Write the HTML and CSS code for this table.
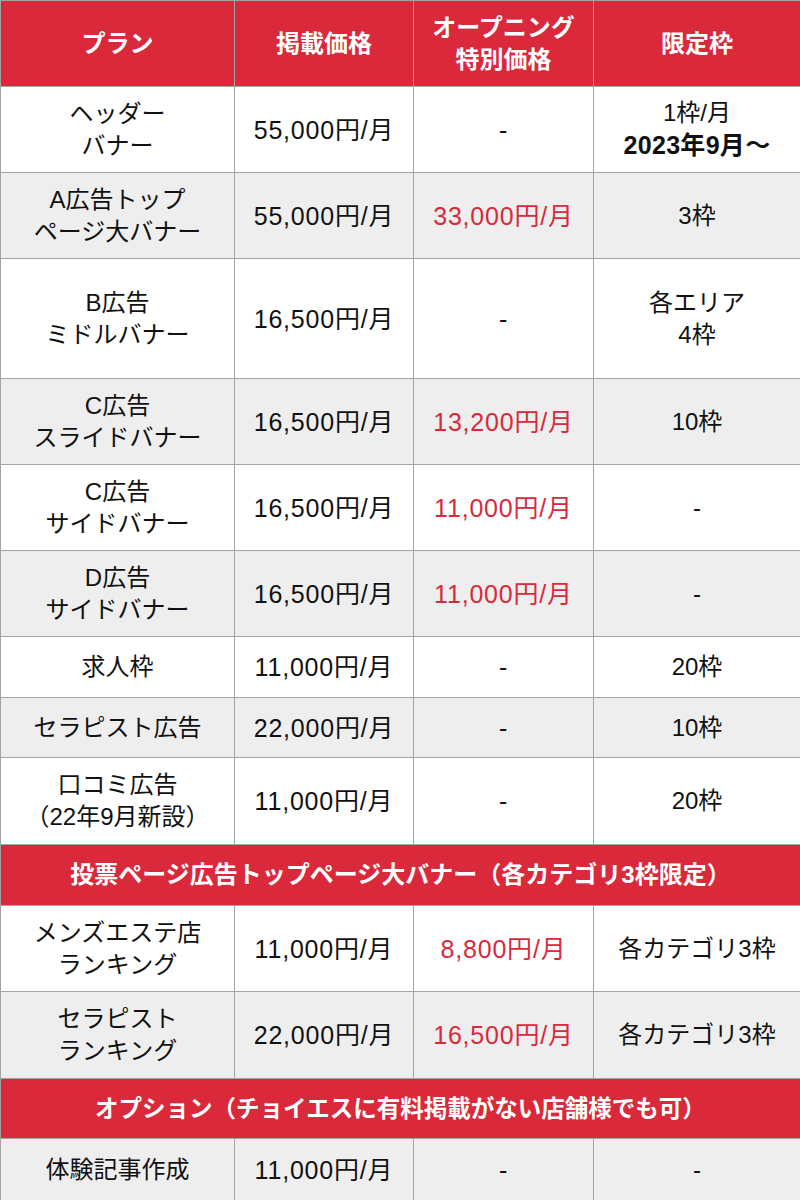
FILE: index.html
```html
<!DOCTYPE html>
<html lang="ja">
<head>
<meta charset="utf-8">
<title>料金表</title>
<link rel="stylesheet" href="styles.css">
</head>
<body>
<table class="price">
  <colgroup>
    <col class="c1"><col class="c2"><col class="c3"><col class="c4">
  </colgroup>
  <thead>
    <tr class="h86 head">
      <th>プラン</th>
      <th>掲載価格</th>
      <th>オープニング<br>特別価格</th>
      <th>限定枠</th>
    </tr>
  </thead>
  <tbody>
    <tr class="h86 w">
      <td>ヘッダー<br>バナー</td>
      <td class="num">55,000円/月</td>
      <td class="num">-</td>
      <td>1枠/月<br><b>2023年9月〜</b></td>
    </tr>
    <tr class="h86 g">
      <td>A広告トップ<br>ページ大バナー</td>
      <td class="num">55,000円/月</td>
      <td class="num red">33,000円/月</td>
      <td>3枠</td>
    </tr>
    <tr class="h120 w">
      <td>B広告<br>ミドルバナー</td>
      <td class="num">16,500円/月</td>
      <td class="num">-</td>
      <td>各エリア<br>4枠</td>
    </tr>
    <tr class="h86 g">
      <td>C広告<br>スライドバナー</td>
      <td class="num">16,500円/月</td>
      <td class="num red">13,200円/月</td>
      <td>10枠</td>
    </tr>
    <tr class="h86 w">
      <td>C広告<br>サイドバナー</td>
      <td class="num">16,500円/月</td>
      <td class="num red">11,000円/月</td>
      <td>-</td>
    </tr>
    <tr class="h86 g">
      <td>D広告<br>サイドバナー</td>
      <td class="num">16,500円/月</td>
      <td class="num red">11,000円/月</td>
      <td>-</td>
    </tr>
    <tr class="h61 w">
      <td>求人枠</td>
      <td class="num">11,000円/月</td>
      <td class="num">-</td>
      <td>20枠</td>
    </tr>
    <tr class="h60 g">
      <td>セラピスト広告</td>
      <td class="num">22,000円/月</td>
      <td class="num">-</td>
      <td>10枠</td>
    </tr>
    <tr class="h87 w">
      <td>口コミ広告<br>（22年9月新設）</td>
      <td class="num">11,000円/月</td>
      <td class="num">-</td>
      <td>20枠</td>
    </tr>
    <tr class="h61 section">
      <th colspan="4" class="s1">投票ページ広告トップページ大バナー（各カテゴリ3枠限定）</th>
    </tr>
    <tr class="h86 w">
      <td>メンズエステ店<br>ランキング</td>
      <td class="num">11,000円/月</td>
      <td class="num red">8,800円/月</td>
      <td>各カテゴリ3枠</td>
    </tr>
    <tr class="h87 g">
      <td>セラピスト<br>ランキング</td>
      <td class="num">22,000円/月</td>
      <td class="num red">16,500円/月</td>
      <td>各カテゴリ3枠</td>
    </tr>
    <tr class="h60 section">
      <th colspan="4" class="s2">オプション（チョイエスに有料掲載がない店舗様でも可）</th>
    </tr>
    <tr class="h62 g">
      <td>体験記事作成</td>
      <td class="num">11,000円/月</td>
      <td class="num">-</td>
      <td>-</td>
    </tr>
  </tbody>
</table>
</body>
</html>
```

FILE: styles.css
```css
html, body {
  margin: 0;
  padding: 0;
  background: #ffffff;
}

body {
  font-family: "Liberation Sans", "Noto Sans CJK JP", sans-serif;
  color: #111111;
}

.price {
  width: 800px;
  table-layout: fixed;
  border-collapse: collapse;
}

.c1 { width: 234px; }
.c2 { width: 179px; }
.c3 { width: 180px; }
.c4 { width: 207px; }

.price th,
.price td {
  border: 1px solid #a3a3a3;
  text-align: center;
  vertical-align: middle;
  padding: 0;
  font-size: 24px;
  line-height: 32px;
}

.price td {
  font-weight: normal;
}

.price td.num {
  font-size: 25px;
  letter-spacing: 0.8px;
}

.price b {
  font-weight: bold;
  font-size: 25px;
  letter-spacing: 0.3px;
}

.head th,
.section th {
  background: #d9293b;
  color: #ffffff;
  font-weight: bold;
}

.section th.s1 {
  font-size: 24px;
}

.section th.s2 {
  font-size: 23.5px;
}

.w td { background: #ffffff; }
.g td { background: #eeeeee; }

.red { color: #d9293b; }

.h60 { height: 60px; }
.h61 { height: 61px; }
.h62 { height: 62px; }
.h86 { height: 86px; }
.h87 { height: 87px; }
.h120 { height: 120px; }
```
